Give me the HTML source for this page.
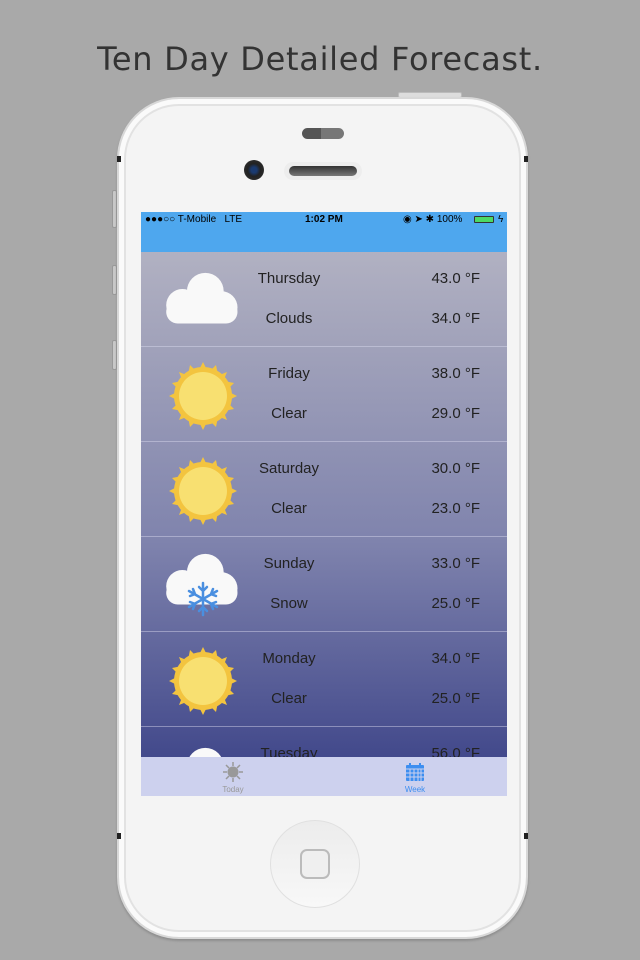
<!DOCTYPE html>
<html><head><meta charset="utf-8"><style>
*{margin:0;padding:0;box-sizing:border-box}
body{width:640px;height:960px;background:#a9a9a9;position:relative;overflow:hidden;font-family:"Liberation Sans",sans-serif}
.title{position:absolute;top:40px;left:0;width:640px;text-align:center;font-family:"DejaVu Sans",sans-serif;font-size:32px;color:#333;letter-spacing:0.7px}
.phone{position:absolute;left:117px;top:97px;width:411px;height:842px;border-radius:62px;background:#f4f4f4;border:2px solid #d8d8d8;box-shadow:inset 0 0 0 5px #fafafa,inset 0 0 0 7px #e2e2e2,0 2px 2px #8e8e8e}
.btn{position:absolute;background:#c8c8c8;border:1px solid #999;width:5px;border-radius:2px}
.screen{position:absolute;left:141px;top:212px;width:366px;height:584px;overflow:hidden;background:linear-gradient(#b1b1c2 40px,#a3a4bb 120px,#7f83ad 330px,#3e4589 560px)}
.sb{height:40px;background:#4ea7ee;font-size:10px;color:#000;position:relative}
.sb span{position:absolute;top:2px}
.row{position:absolute;left:0;width:366px;height:95px;border-bottom:1px solid rgba(220,220,240,.45)}
.day,.desc{position:absolute;width:120px;left:88px;text-align:center;font-size:15px;color:#222}
.day{top:18px}.desc{top:58px}
.hi,.lo{position:absolute;right:27px;font-size:15px;color:#222}
.hi{top:18px}.lo{top:58px}
.ic{position:absolute;left:24px;top:14px}
.tab{position:absolute;left:0;top:545px;width:366px;height:39px;background:#cdd1ee}
</style></head><body>
<div class="title">Ten Day Detailed Forecast.</div>
<div class="btn" style="left:112px;top:190px;height:38px"></div>
<div class="btn" style="left:112px;top:265px;height:30px"></div>
<div class="btn" style="left:112px;top:340px;height:30px"></div>
<div style="position:absolute;left:398px;top:92px;width:64px;height:6px;background:#ddd;border:1px solid #bbb;border-radius:2px"></div>
<div class="phone"></div>
<div style="position:absolute;left:302px;top:128px;width:42px;height:11px;border-radius:6px;background:linear-gradient(90deg,#555 45%,#777 45%)"></div>
<div style="position:absolute;left:244px;top:160px;width:20px;height:20px;border-radius:50%;background:radial-gradient(circle,#1a3a70 20%,#222 45%,#333 100%)"></div>
<div style="position:absolute;left:284px;top:162px;width:78px;height:18px;border-radius:9px;background:#ededed"></div>
<div style="position:absolute;left:289px;top:166px;width:68px;height:10px;border-radius:5px;background:linear-gradient(#333,#777)"></div>
<div style="position:absolute;left:270px;top:820px;width:90px;height:88px;border-radius:50%;background:linear-gradient(#ececec,#f8f8f8);border:1px solid #e0e0e0"></div>
<div style="position:absolute;left:300px;top:849px;width:30px;height:30px;border-radius:7px;border:2px solid #bbb;background:#efefef"></div>
<div style="position:absolute;left:117px;top:156px;width:4px;height:6px;background:#222"></div>
<div style="position:absolute;left:524px;top:156px;width:4px;height:6px;background:#222"></div>
<div style="position:absolute;left:117px;top:833px;width:4px;height:6px;background:#222"></div>
<div style="position:absolute;left:524px;top:833px;width:4px;height:6px;background:#222"></div>
<div class="screen">
<div class="sb"><span style="left:4px">●●●○○ T-Mobile&nbsp;&nbsp; LTE</span><span style="left:164px;font-weight:bold">1:02 PM</span><span style="left:262px">◉ ➤ ✱ 100%</span><span style="left:333px;top:4px;width:20px;height:7px;background:#4cd964;border:1px solid #333;border-radius:1px"></span><span style="left:357px">ϟ</span></div>
<svg width="0" height="0" style="position:absolute"><defs>
<g id="sun"><g fill="#f3c43f"><circle cx="34" cy="34" r="29"/>
<polygon points="34,0 39,10 29,10"/><polygon points="34,68 39,58 29,58"/><polygon points="0,34 10,29 10,39"/><polygon points="68,34 58,29 58,39"/>
<polygon points="10,10 20,14 14,20"/><polygon points="58,10 54,20 48,14"/><polygon points="10,58 14,48 20,54"/><polygon points="58,58 48,54 54,48"/>
<polygon points="21,3 28,10 19,13"/><polygon points="47,3 49,13 40,10"/><polygon points="3,21 13,19 10,28"/><polygon points="65,21 58,28 55,19"/>
<polygon points="3,47 10,40 13,49"/><polygon points="65,47 55,49 58,40"/><polygon points="21,65 19,55 28,58"/><polygon points="47,65 40,58 49,55"/></g>
<circle cx="34" cy="34" r="24" fill="#f8e071"/></g>
<g id="cloud" fill="#f9f9f9"><circle cx="42" cy="22" r="16"/><circle cx="22" cy="34" r="14"/><circle cx="56" cy="36" r="14"/><rect x="8" y="30" width="62" height="20" rx="10"/></g>
</defs></svg>
<div class="row" style="top:40px"><svg class="ic" width="90" height="70"><use href="#cloud" transform="translate(-8,0) scale(1.15)"/></svg><div class="day">Thursday</div><div class="desc">Clouds</div><div class="hi">43.0 °F</div><div class="lo">34.0 °F</div></div>
<div class="row" style="top:135px"><svg class="ic" width="80" height="70" style="top:15px"><use href="#sun" x="4"/></svg><div class="day">Friday</div><div class="desc">Clear</div><div class="hi">38.0 °F</div><div class="lo">29.0 °F</div></div>
<div class="row" style="top:230px"><svg class="ic" width="80" height="70" style="top:15px"><use href="#sun" x="4"/></svg><div class="day">Saturday</div><div class="desc">Clear</div><div class="hi">30.0 °F</div><div class="lo">23.0 °F</div></div>
<div class="row" style="top:325px"><svg class="ic" width="90" height="80" style="top:10px"><use href="#cloud" transform="translate(-8,0) scale(1.15)"/><g stroke="#4a8fe0" stroke-width="2.5" stroke-linecap="round" fill="none" transform="translate(38,52)"><path d="M0-16V16M-14-8L14 8M-14 8L14-8M-4-12L0-8L4-12M-4 12L0 8L4 12M-13-3L-8-5L-10-10M13 3L8 5L10 10M-13 3L-8 5L-10 10M13-3L8-5L10-10"/></g></svg><div class="day">Sunday</div><div class="desc">Snow</div><div class="hi">33.0 °F</div><div class="lo">25.0 °F</div></div>
<div class="row" style="top:420px"><svg class="ic" width="80" height="70" style="top:15px"><use href="#sun" x="4"/></svg><div class="day">Monday</div><div class="desc">Clear</div><div class="hi">34.0 °F</div><div class="lo">25.0 °F</div></div>
<div class="row" style="top:515px"><svg class="ic" width="90" height="70"><use href="#cloud" transform="translate(-8,0) scale(1.15)"/></svg><div class="day">Tuesday</div><div class="hi">56.0 °F</div></div>
<div class="tab">
<svg style="position:absolute;left:81px;top:4px" width="22" height="22"><g stroke="#999" stroke-width="1.5"><path d="M11 1V5M11 17V21M1 11H5M17 11H21M4 4L7 7M15 15L18 18M4 18L7 15M15 7L18 4"/></g><circle cx="11" cy="11" r="5.5" fill="#999"/></svg>
<div style="position:absolute;left:72px;top:28px;width:40px;text-align:center;font-size:8px;color:#999">Today</div>
<svg style="position:absolute;left:264px;top:5px" width="20" height="20"><rect x="1" y="3" width="18" height="16" fill="#3d8ef0" rx="1"/><g stroke="#cdd1ee" stroke-width="1"><path d="M1 7H19M1 11H19M1 15H19M5 7V19M9 7V19M13 7V19M16 7V19"/></g><path d="M5 1V4M15 1V4" stroke="#3d8ef0" stroke-width="2"/></svg>
<div style="position:absolute;left:254px;top:28px;width:40px;text-align:center;font-size:8px;color:#3d8ef0">Week</div>
</div>
</div>
</body></html>
